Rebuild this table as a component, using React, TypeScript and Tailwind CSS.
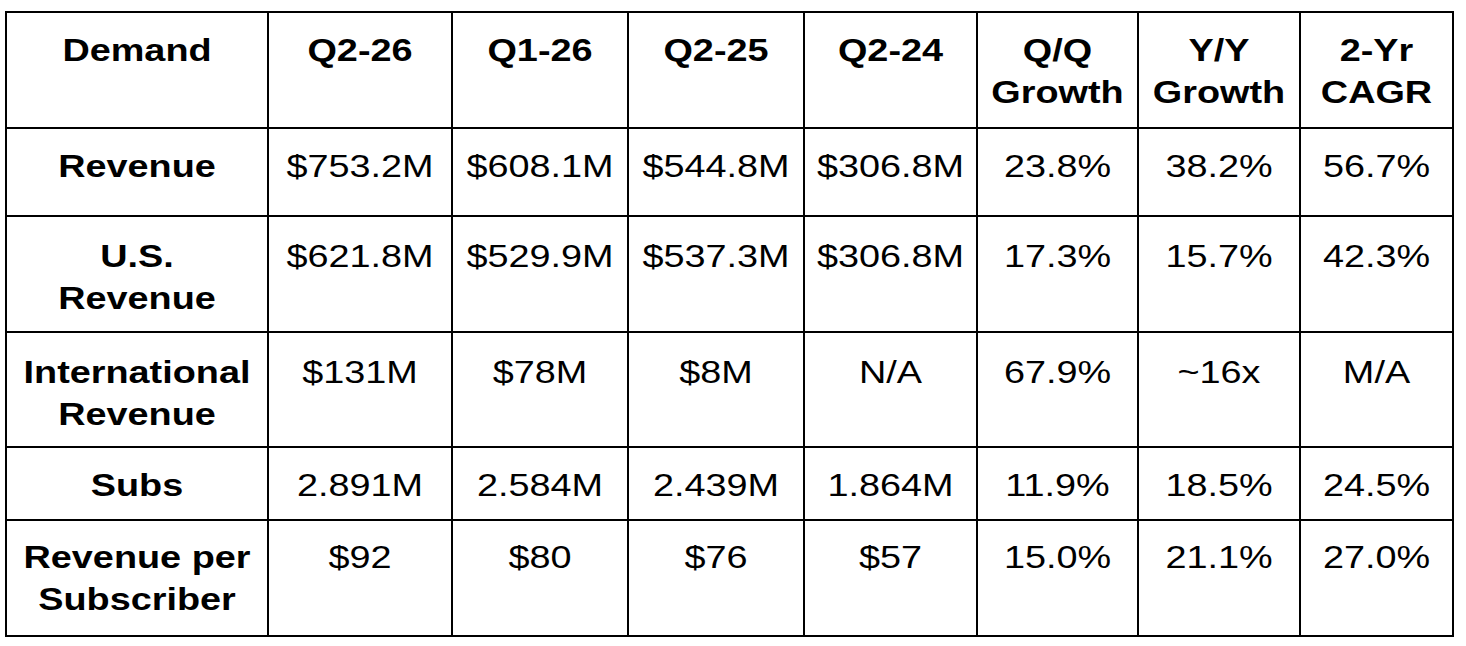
import React from "react";

type Row = { label: string[]; cells: string[][]; pt: string };

const header: string[][] = [
  ["Demand"],
  ["Q2-26"],
  ["Q1-26"],
  ["Q2-25"],
  ["Q2-24"],
  ["Q/Q", "Growth"],
  ["Y/Y", "Growth"],
  ["2-Yr", "CAGR"],
];

const rows: Row[] = [
  {
    label: ["Revenue"],
    cells: [["$753.2M"], ["$608.1M"], ["$544.8M"], ["$306.8M"], ["23.8%"], ["38.2%"], ["56.7%"]],
    pt: "pt-[17px]",
  },
  {
    label: ["U.S.", "Revenue"],
    cells: [["$621.8M"], ["$529.9M"], ["$537.3M"], ["$306.8M"], ["17.3%"], ["15.7%"], ["42.3%"]],
    pt: "pt-[19px]",
  },
  {
    label: ["International", "Revenue"],
    cells: [["$131M"], ["$78M"], ["$8M"], ["N/A"], ["67.9%"], ["~16x"], ["M/A"]],
    pt: "pt-[19px]",
  },
  {
    label: ["Subs"],
    cells: [["2.891M"], ["2.584M"], ["2.439M"], ["1.864M"], ["11.9%"], ["18.5%"], ["24.5%"]],
    pt: "pt-[17px]",
  },
  {
    label: ["Revenue per", "Subscriber"],
    cells: [["$92"], ["$80"], ["$76"], ["$57"], ["15.0%"], ["21.1%"], ["27.0%"]],
    pt: "pt-[16px]",
  },
];

function Cell({ lines, bold, pt }: { lines: string[]; bold?: boolean; pt: string }) {
  return (
    <div className={`bg-white ${pt}`}>
      <div
        className={`scale-x-[1.22] text-center whitespace-nowrap text-[31px] leading-[42px] text-black ${
          bold ? "font-bold" : "font-normal"
        }`}
      >
        {lines.map((l, i) => (
          <div key={i}>{l}</div>
        ))}
      </div>
    </div>
  );
}

export default function App() {
  return (
    <div className="w-[1466px] h-[646px] bg-white font-['Liberation_Sans',Arial,sans-serif] pt-[11px] pl-[5px]">
      <div className="inline-grid bg-black p-[2px] gap-[2px] grid-cols-[260px_182px_174px_174px_171px_159px_160px_151px] grid-rows-[114px_86px_114px_113px_71px_114px]">
        {header.map((h, i) => (
          <Cell key={`h${i}`} lines={h} bold pt="pt-[17px]" />
        ))}
        {rows.map((r, ri) => (
          <React.Fragment key={ri}>
            <Cell lines={r.label} bold pt={r.pt} />
            {r.cells.map((c, ci) => (
              <Cell key={ci} lines={c} pt={r.pt} />
            ))}
          </React.Fragment>
        ))}
      </div>
    </div>
  );
}
